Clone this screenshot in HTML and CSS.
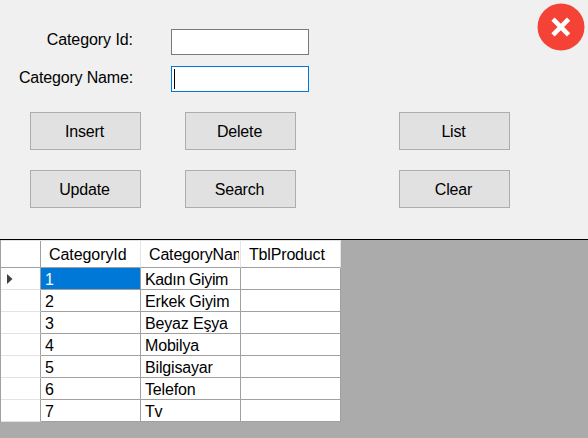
FILE: index.html
```html
<!DOCTYPE html>
<html lang="tr">
<head>
<meta charset="utf-8">
<title>Category</title>
<link rel="stylesheet" href="styles.css">
</head>
<body>
<main class="window">
  <section class="form">
    <button class="close" aria-label="Close">
      <svg viewBox="0 0 48 48" width="48" height="48"><circle cx="24" cy="24" r="23.5" fill="#f44336"/><path d="M16 16.2l15.6 15.6M31.6 16.2L16 31.8" stroke="#fff" stroke-width="4.6" fill="none"/></svg>
    </button>
    <div class="fields">
      <div class="field"><label class="label wide" for="cid">Category Id:</label><input class="input" id="cid"></div>
      <div class="field"><label class="label low" for="cname">Category Name:</label><div class="input focused" id="cname"><span class="caret"></span></div></div>
    </div>
    <div class="buttons">
      <button class="btn">Insert</button><button class="btn">Delete</button><button class="btn">List</button>
      <button class="btn">Update</button><button class="btn">Search</button><button class="btn">Clear</button>
    </div>
  </section>
  <section class="grid-area">
    <div class="grid">
      <div class="row head"><div class="mark"></div><div class="cell wide">CategoryId</div><div class="cell"><div class="clip">CategoryName</div></div><div class="cell">TblProduct</div></div>
      <div class="row"><div class="mark"><svg width="6" height="10" viewBox="0 0 6 10"><path d="M0 0L5.5 5L0 10Z" fill="#404040"/></svg></div><div class="cell selected">1</div><div class="cell tight">Kadın Giyim</div><div class="cell"></div></div>
      <div class="row"><div class="mark"></div><div class="cell">2</div><div class="cell">Erkek Giyim</div><div class="cell"></div></div>
      <div class="row"><div class="mark"></div><div class="cell">3</div><div class="cell">Beyaz Eşya</div><div class="cell"></div></div>
      <div class="row"><div class="mark"></div><div class="cell">4</div><div class="cell">Mobilya</div><div class="cell"></div></div>
      <div class="row"><div class="mark"></div><div class="cell">5</div><div class="cell">Bilgisayar</div><div class="cell"></div></div>
      <div class="row"><div class="mark"></div><div class="cell">6</div><div class="cell">Telefon</div><div class="cell"></div></div>
      <div class="row"><div class="mark"></div><div class="cell">7</div><div class="cell">Tv</div><div class="cell"></div></div>
    </div>
  </section>
</main>
</body>
</html>
```
FILE: styles.css
```css
* { box-sizing: border-box; }
body { margin: 0; }
.window {
  display: flex;
  flex-direction: column;
  position: relative;
  width: 588px;
  height: 438px;
  overflow: hidden;
  background: #f0f0f0;
  color: #000;
  font: 16px/20px "Liberation Sans", Arial, sans-serif;
  letter-spacing: -0.17px;
}
.form { height: 239px; padding-top: 29px; }
.close {
  position: absolute;
  top: 3px;
  right: 3px;
  width: 48px;
  height: 48px;
  padding: 0;
  border: 0;
  background: none;
}
.close svg { display: block; }
.fields { display: flex; flex-direction: column; gap: 11px; }
.field { display: flex; height: 26px; }
.label { width: 133px; margin-right: 38px; padding-top: 1px; text-align: right; white-space: nowrap; }
.low { padding-top: 2px; }
.wide { letter-spacing: -0.07px; }
.tight { letter-spacing: -0.37px; }
.input {
  width: 138px;
  height: 26px;
  padding: 2px;
  border: 1px solid #7a7a7a;
  border-radius: 0;
  background: #fff;
  outline: 0;
}
.focused { border-color: #0078d7; }
.caret { display: block; width: 1px; height: 20px; background: #000; }
.buttons {
  display: grid;
  grid-template-columns: 155px 214px 111px;
  row-gap: 20px;
  margin: 20px 0 0 30px;
}
.btn {
  width: 111px;
  height: 38px;
  padding: 2px 2px 0 0;
  border: 1px solid #adadad;
  border-radius: 0;
  background: #e1e1e1;
  color: #000;
  font: inherit;
  letter-spacing: inherit;
}
.grid-area { flex: 1; border-top: 1px solid #000; background: #ababab; }
.grid { width: 341px; border-left: 1px solid #a0a0a0; background: #fff; }
.row { display: grid; grid-template-columns: 40px 100px 100px 100px; height: 22px; }
.cell {
  padding-left: 4px;
  border-right: 1px solid #a0a0a0;
  border-bottom: 1px solid #a0a0a0;
  overflow: hidden;
  white-space: nowrap;
  line-height: 24px;
}
.mark {
  display: flex;
  align-items: center;
  padding-left: 6px;
  border-right: 1px solid #a0a0a0;
  border-bottom: 1px solid #e3e3e3;
}
.head { height: 28px; border-top: 1px solid #e3e3e3; }
.head .cell { padding-left: 8px; border-right-color: #e5e5e5; line-height: 27px; }
.head .mark { border-bottom-color: #a0a0a0; }
.clip { width: 90px; overflow: hidden; }
.selected { background: #0078d7; color: #fff; }
```
